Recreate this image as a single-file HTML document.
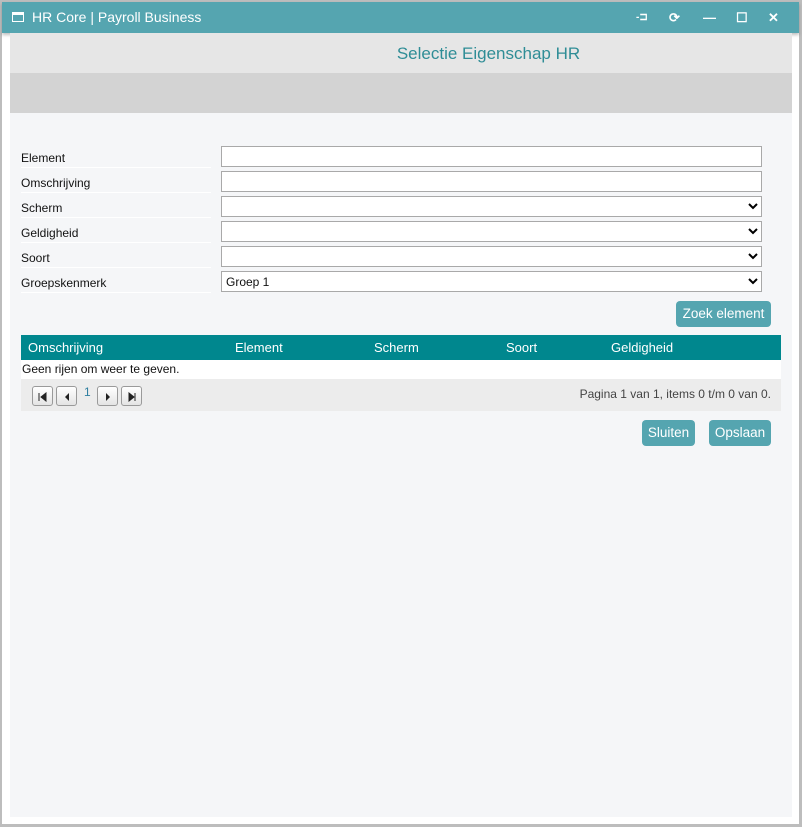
<!DOCTYPE html><html><head><style>
*{box-sizing:border-box;margin:0;padding:0}
body{width:802px;height:827px;background:#bdbdbd;font-family:"Segoe UI","Liberation Sans",sans-serif;font-size:12px;position:relative;overflow:hidden}
.win{position:absolute;left:2px;top:2px;width:797px;height:822px;background:#fff}
.title{position:absolute;left:0;top:0;width:797px;height:31px;background:#55a5b0;color:#fff;font-size:14px;line-height:31px;padding-left:30px;box-shadow:0 2px 3px rgba(0,0,0,.25)}
.ticon{position:absolute;left:10px;top:10px;width:12px;height:10px;border:1.5px solid #fff;border-top-width:3px}
.ctl{position:absolute;top:0;color:#fff;font-size:13px;font-weight:bold}
.hdr{position:absolute;left:8px;top:31px;width:782px;height:40px;background:#e6e6e6;color:#2f8d96;font-size:17px;text-align:center;line-height:42px;padding-left:175px}
.band{position:absolute;left:8px;top:71px;width:782px;height:40px;background:#d3d3d3}
.content{position:absolute;left:8px;top:111px;width:782px;height:704px;background:#f5f6f8}
.lbl{position:absolute;left:11px;width:190px;height:20px;border-bottom:1px solid #fff;line-height:20px;color:#111}
.inp{position:absolute;left:211px;width:541px;height:21px;border:1px solid #a9a9a9;background:#fff;line-height:21px;padding-left:4px;color:#111}
.inp svg{position:absolute;right:3px;top:6px}
.btn{position:absolute;background:#55a5b0;color:#fff;border-radius:4px;font-size:13.5px;text-align:center;line-height:26px;height:26px}
.th{position:absolute;left:11px;top:222px;width:760px;height:25px;background:#00878e;color:#fff;font-size:13px;line-height:25px}
.th span{position:absolute}
.empty{position:absolute;left:11px;top:247px;width:760px;height:19px;background:#fff;line-height:18px;padding-left:1px;color:#111}
.pager{position:absolute;left:11px;top:266px;width:760px;height:32px;background:#ececec}
.pb{position:absolute;top:7px;width:21px;height:20px;border:1px solid #9a9a9a;border-radius:3px;background:linear-gradient(#fff,#e4e4e4)}
.pb svg{position:absolute;left:5px;top:5px}
</style></head><body>
<div class="win">
<div class="title"><div class="ticon"></div>HR Core | Payroll Business
<span class="ctl" style="left:634px;font-size:10px">-⊐</span>
<span class="ctl" style="left:667px">⟳</span>
<span class="ctl" style="left:701px">—</span>
<span class="ctl" style="left:734px">☐</span>
<span class="ctl" style="left:766px">✕</span>
</div>
<div class="hdr">Selectie Eigenschap HR</div>
<div class="band"></div>
<div class="content">
<div class="lbl" style="top:35px">Element</div><div class="inp" style="top:33px"></div>
<div class="lbl" style="top:60px">Omschrijving</div><div class="inp" style="top:58px"></div>
<div class="lbl" style="top:85px">Scherm</div><div class="inp" style="top:83px"><svg width="10" height="7"><path d="M1 1L5 5L9 1" stroke="#000" stroke-width="2" fill="none"/></svg></div>
<div class="lbl" style="top:110px">Geldigheid</div><div class="inp" style="top:108px"><svg width="10" height="7"><path d="M1 1L5 5L9 1" stroke="#000" stroke-width="2" fill="none"/></svg></div>
<div class="lbl" style="top:135px">Soort</div><div class="inp" style="top:133px"><svg width="10" height="7"><path d="M1 1L5 5L9 1" stroke="#000" stroke-width="2" fill="none"/></svg></div>
<div class="lbl" style="top:160px">Groepskenmerk</div><div class="inp" style="top:158px">Groep 1<svg width="10" height="7"><path d="M1 1L5 5L9 1" stroke="#000" stroke-width="2" fill="none"/></svg></div>
<div class="btn" style="left:666px;top:188px;width:95px">Zoek element</div>
<div class="th"><span style="left:7px">Omschrijving</span><span style="left:214px">Element</span><span style="left:353px">Scherm</span><span style="left:485px">Soort</span><span style="left:590px">Geldigheid</span></div>
<div class="empty">Geen rijen om weer te geven.</div>
<div class="pager">
<div class="pb" style="left:11px"><svg width="10" height="10"><path d="M1 1V9M3 5L8 1V9Z" fill="#222" stroke="#222"/></svg></div>
<div class="pb" style="left:35px"><svg width="10" height="10"><path d="M3 5L7 1V9Z" fill="#222"/></svg></div>
<span style="position:absolute;left:63px;top:6px;color:#2f7fa0">1</span>
<div class="pb" style="left:76px"><svg width="10" height="10"><path d="M3 1L7 5L3 9Z" fill="#222"/></svg></div>
<div class="pb" style="left:100px"><svg width="10" height="10"><path d="M2 1L7 5L2 9ZM8 1V9" fill="#222" stroke="#222"/></svg></div>
<span style="position:absolute;right:10px;top:8px;color:#444">Pagina 1 van 1, items 0 t/m 0 van 0.</span>
</div>
<div class="btn" style="left:632px;top:307px;width:53px">Sluiten</div>
<div class="btn" style="left:699px;top:307px;width:62px">Opslaan</div>
</div>
</div>
</body></html>
